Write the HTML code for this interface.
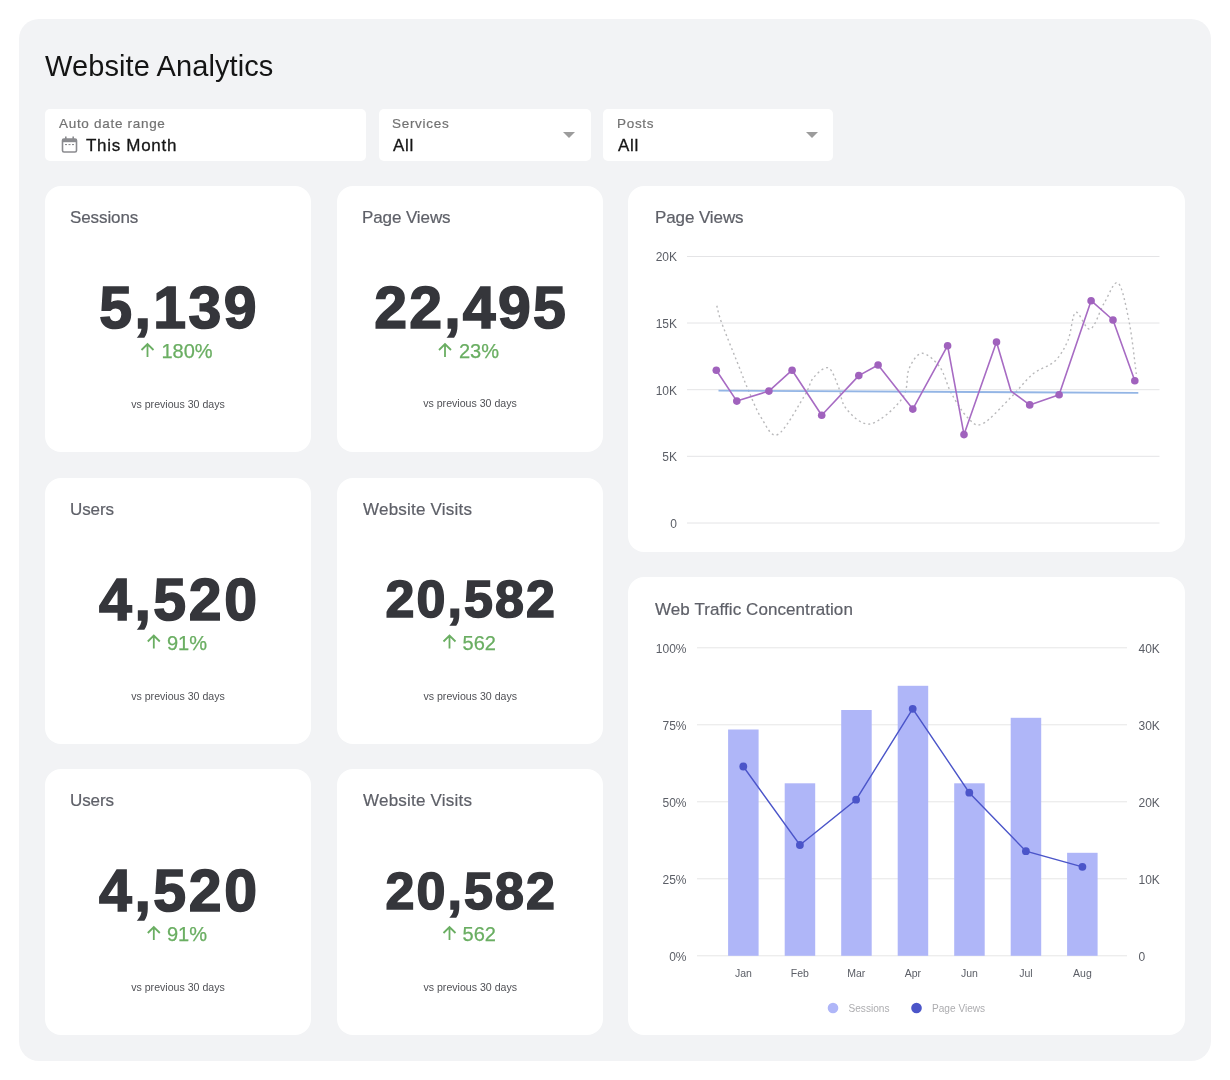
<!DOCTYPE html>
<html><head><meta charset="utf-8">
<style>
html,body{margin:0;padding:0;background:#fff;width:1230px;height:1080px;overflow:hidden;}
body{font-family:"Liberation Sans",sans-serif;position:relative;}
.abs{position:absolute;white-space:nowrap;line-height:1;will-change:transform;}
#panel{position:absolute;left:19px;top:19px;width:1192px;height:1042px;background:#f2f3f5;border-radius:20px;}
.box{position:absolute;background:#fff;border-radius:5px;top:109px;height:52px;}
.card{position:absolute;background:#fff;border-radius:16px;}
.tri{position:absolute;top:132px;width:0;height:0;border-left:6px solid transparent;border-right:6px solid transparent;border-top:6px solid #9c9c9c;}
.flab{font-size:13.5px;color:#727272;letter-spacing:0.7px;-webkit-text-stroke:0.2px #727272;}
.fval{font-size:17px;color:#161616;letter-spacing:0.7px;-webkit-text-stroke:0.3px #161616;}
.ctitle{font-size:17px;color:#5e6068;letter-spacing:-0.1px;-webkit-text-stroke:0.2px #5e6068;}
.big{font-weight:700;color:#35363b;text-align:center;-webkit-text-stroke:1.6px #35363b;}
.grn{font-size:20px;color:#6aae62;text-align:center;-webkit-text-stroke:0.25px #6aae62;}
.vs{font-size:10.6px;color:#505156;text-align:center;}
svg text{font-family:"Liberation Sans",sans-serif;}
</style></head>
<body>
<div id="panel"></div>
<div class="abs" style="left:45px;top:51.9px;font-size:29px;color:#141414;letter-spacing:0.1px;">Website Analytics</div>

<div class="box" style="left:45px;width:321px;"></div>
<div class="box" style="left:379px;width:212px;"></div>
<div class="box" style="left:603px;width:230px;"></div>
<div class="tri" style="left:563px;"></div>
<div class="tri" style="left:805.5px;"></div>

<div class="abs flab" style="left:59px;top:117px;">Auto date range</div>
<div class="abs fval" style="left:86px;top:136.9px;">This Month</div>
<svg class="abs" style="left:61px;top:136px;" width="17" height="17" viewBox="0 0 17 17">
  <rect x="1.5" y="3" width="14" height="13" rx="1.5" fill="none" stroke="#8a8b8f" stroke-width="1.6"/>
  <rect x="1.5" y="3" width="14" height="3.2" fill="#8a8b8f"/>
  <rect x="4" y="0.5" width="1.6" height="3" fill="#8a8b8f"/>
  <rect x="11.4" y="0.5" width="1.6" height="3" fill="#8a8b8f"/>
  <rect x="4" y="8" width="2" height="1.1" fill="#8a8b8f"/>
  <rect x="7.5" y="8" width="2" height="1.1" fill="#8a8b8f"/>
  <rect x="11" y="8" width="2" height="1.1" fill="#8a8b8f"/>
</svg>
<div class="abs flab" style="left:392px;top:117px;">Services</div>
<div class="abs fval" style="left:393px;top:136.9px;">All</div>
<div class="abs flab" style="left:617px;top:117px;">Posts</div>
<div class="abs fval" style="left:617.5px;top:136.8px;">All</div>

<!-- KPI cards -->
<div class="card" style="left:45px;top:186px;width:266px;height:266px;"></div>
<div class="card" style="left:336.5px;top:186px;width:266px;height:266px;"></div>
<div class="card" style="left:45px;top:477.5px;width:266px;height:266px;"></div>
<div class="card" style="left:336.5px;top:477.5px;width:266.5px;height:266.5px;"></div>
<div class="card" style="left:45px;top:769px;width:266px;height:266px;"></div>
<div class="card" style="left:336.5px;top:769px;width:266.5px;height:266px;"></div>
<div class="card" style="left:628px;top:186px;width:557px;height:366px;"></div>
<div class="card" style="left:628px;top:577px;width:557px;height:458px;"></div>

<!-- card 1 -->
<div class="abs ctitle" style="left:70px;top:209.2px;">Sessions</div>
<div class="abs big" style="left:45px;width:266px;top:279.2px;font-size:59px;letter-spacing:2.4px;text-indent:2.4px;">5,139</div>
<div class="abs grn" style="left:45px;width:266px;top:341.3px;"><span style="display:inline-block;width:18px;"></span>180%</div>
<div class="abs vs" style="left:45px;width:266px;top:399.3px;">vs previous 30 days</div>

<!-- card 2 -->
<div class="abs ctitle" style="left:361.5px;top:209.2px;">Page Views</div>
<div class="abs big" style="left:336.5px;width:266px;top:278.9px;font-size:59px;letter-spacing:2.2px;text-indent:2.2px;">22,495</div>
<div class="abs grn" style="left:336.5px;width:266px;top:341px;"><span style="display:inline-block;width:18px;"></span>23%</div>
<div class="abs vs" style="left:336.5px;width:266px;top:398.4px;">vs previous 30 days</div>

<!-- card 3 -->
<div class="abs ctitle" style="left:70px;top:500.7px;">Users</div>
<div class="abs big" style="left:45px;width:266px;top:570.8px;font-size:59px;letter-spacing:2.6px;text-indent:2.6px;">4,520</div>
<div class="abs grn" style="left:45px;width:266px;top:632.7px;"><span style="display:inline-block;width:18px;"></span>91%</div>
<div class="abs vs" style="left:45px;width:266px;top:690.8px;">vs previous 30 days</div>

<!-- card 4 -->
<div class="abs ctitle" style="left:363px;top:500.7px;letter-spacing:0.22px;">Website Visits</div>
<div class="abs big" style="left:336.5px;width:266.5px;top:573.3px;font-size:52px;letter-spacing:2.1px;text-indent:2.1px;">20,582</div>
<div class="abs grn" style="left:336.5px;width:266.5px;top:632.5px;"><span style="display:inline-block;width:18px;"></span>562</div>
<div class="abs vs" style="left:336.5px;width:266.5px;top:690.8px;">vs previous 30 days</div>

<!-- card 5 -->
<div class="abs ctitle" style="left:70px;top:792.2px;">Users</div>
<div class="abs big" style="left:45px;width:266px;top:861.7px;font-size:59px;letter-spacing:2.6px;text-indent:2.6px;">4,520</div>
<div class="abs grn" style="left:45px;width:266px;top:924.2px;"><span style="display:inline-block;width:18px;"></span>91%</div>
<div class="abs vs" style="left:45px;width:266px;top:982.3px;">vs previous 30 days</div>

<!-- card 6 -->
<div class="abs ctitle" style="left:363px;top:792.2px;letter-spacing:0.22px;">Website Visits</div>
<div class="abs big" style="left:336.5px;width:266.5px;top:864.6px;font-size:52px;letter-spacing:2.1px;text-indent:2.1px;">20,582</div>
<div class="abs grn" style="left:336.5px;width:266.5px;top:924px;"><span style="display:inline-block;width:18px;"></span>562</div>
<div class="abs vs" style="left:336.5px;width:266.5px;top:982.3px;">vs previous 30 days</div>

<!-- chart titles -->
<div class="abs ctitle" style="left:654.5px;top:209.2px;">Page Views</div>
<div class="abs ctitle" style="left:654.5px;top:600.7px;letter-spacing:0.08px;">Web Traffic Concentration</div>

<!-- chart overlay svg -->
<svg style="position:absolute;left:0;top:0;" width="1230" height="1080" viewBox="0 0 1230 1080">
  <!-- chart1 grid -->
  <g stroke="#e4e4e6" stroke-width="1">
    <line x1="687" y1="256.5" x2="1159.5" y2="256.5"/>
    <line x1="687" y1="323" x2="1159.5" y2="323"/>
    <line x1="687" y1="389.7" x2="1159.5" y2="389.7"/>
    <line x1="687" y1="456.3" x2="1159.5" y2="456.3"/>
    <line x1="687" y1="523" x2="1159.5" y2="523"/>
  </g>
  <g font-size="12" fill="#5b5e66" text-anchor="end">
    <text x="677" y="261.2">20K</text>
    <text x="677" y="327.8">15K</text>
    <text x="677" y="394.5">10K</text>
    <text x="677" y="461.1">5K</text>
    <text x="677" y="527.8">0</text>
  </g>
  <path d="M716.8,305.7 C717.6,308.6 718.0,312.9 721.7,323.0 C725.4,333.1 734.3,354.9 738.8,366.2 C743.3,377.5 744.7,381.9 748.5,390.6 C752.3,399.3 756.6,410.9 761.5,418.2 C766.4,425.5 770.8,438.0 777.8,434.5 C784.8,431.0 797.8,406.5 803.8,397.0 C809.8,387.5 809.5,382.5 813.6,377.6 C817.7,372.7 824.1,366.5 828.2,367.8 C832.3,369.1 835.0,378.9 838.0,385.7 C841.0,392.5 840.7,402.1 846.1,408.5 C851.5,414.9 861.1,425.6 870.5,423.9 C879.9,422.1 896.1,407.2 902.5,398.0 C908.9,388.8 905.8,376.2 909.0,368.8 C912.2,361.4 916.9,353.6 922.0,353.3 C927.1,353.0 935.0,360.6 939.9,367.2 C944.8,373.8 946.7,384.8 951.3,393.2 C955.9,401.6 962.5,412.5 967.6,417.6 C972.8,422.7 975.2,427.1 982.2,424.0 C989.2,420.9 1001.0,407.1 1009.5,398.8 C1018.0,390.5 1025.3,380.3 1032.9,374.0 C1040.5,367.7 1049.2,366.6 1055.0,361.0 C1060.8,355.4 1064.5,348.3 1068.0,340.2 C1071.5,332.1 1072.1,314.1 1075.8,312.3 C1079.5,310.5 1085.4,330.8 1090.2,329.2 C1095.0,327.6 1099.8,310.2 1104.5,302.5 C1109.2,294.8 1114.0,279.8 1118.1,283.0 C1122.2,286.2 1126.2,306.8 1129.2,322.0 C1132.2,337.2 1135.1,365.3 1136.3,374.0" fill="none" stroke="#b9b9bb" stroke-width="1.4" stroke-dasharray="2 3"/>
  <line x1="718.5" y1="390.6" x2="1138.3" y2="392.9" stroke="#93b5e5" stroke-width="1.9"/>
  <polyline fill="none" stroke="#a76bc3" stroke-width="1.6" stroke-linejoin="round" points="716.3,370.2 736.8,401.1 768.9,391.1 792.1,370.2 821.7,415.3 858.8,375.6 878.1,365 912.8,409.1 947.6,345.7 964,434.6 996.5,342 1011,391.2 1029.7,404.9 1059.1,394.8 1091.1,300.7 1113,320 1134.8,380.7"/>
  <g fill="#a062bd">
    <circle cx="716.3" cy="370.2" r="3.8"/><circle cx="736.8" cy="401.1" r="3.8"/><circle cx="768.9" cy="391.1" r="3.8"/><circle cx="792.1" cy="370.2" r="3.8"/><circle cx="821.7" cy="415.3" r="3.8"/><circle cx="858.8" cy="375.6" r="3.8"/><circle cx="878.1" cy="365" r="3.8"/><circle cx="912.8" cy="409.1" r="3.8"/><circle cx="947.6" cy="345.7" r="3.8"/><circle cx="964" cy="434.6" r="3.8"/><circle cx="996.5" cy="342" r="3.8"/><circle cx="1029.7" cy="404.9" r="3.8"/><circle cx="1059.1" cy="394.8" r="3.8"/><circle cx="1091.1" cy="300.7" r="3.8"/><circle cx="1113" cy="320" r="3.8"/><circle cx="1134.8" cy="380.7" r="3.8"/>
  </g>

  <!-- chart2 grid -->
  <g stroke="#e6e6e6" stroke-width="1">
    <line x1="697" y1="647.8" x2="1127" y2="647.8"/>
    <line x1="697" y1="724.8" x2="1127" y2="724.8"/>
    <line x1="697" y1="801.8" x2="1127" y2="801.8"/>
    <line x1="697" y1="878.8" x2="1127" y2="878.8"/>
    <line x1="697" y1="955.8" x2="1127" y2="955.8"/>
  </g>
  <g font-size="12" fill="#5b5e66" text-anchor="end">
    <text x="686.5" y="653.1">100%</text>
    <text x="686.5" y="730.1">75%</text>
    <text x="686.5" y="807.1">50%</text>
    <text x="686.5" y="884.1">25%</text>
    <text x="686.5" y="961.1">0%</text>
  </g>
  <g font-size="12" fill="#5b5e66" text-anchor="start">
    <text x="1138.5" y="653.1">40K</text>
    <text x="1138.5" y="730.1">30K</text>
    <text x="1138.5" y="807.1">20K</text>
    <text x="1138.5" y="884.1">10K</text>
    <text x="1138.5" y="961.1">0</text>
  </g>
  <g fill="#afb6f8">
    <rect x="728.1" y="729.5" width="30.5" height="226.3"/>
    <rect x="784.7" y="783.3" width="30.5" height="172.5"/>
    <rect x="841.2" y="710" width="30.5" height="245.8"/>
    <rect x="897.7" y="685.8" width="30.5" height="270"/>
    <rect x="954.2" y="783.3" width="30.5" height="172.5"/>
    <rect x="1010.7" y="717.8" width="30.5" height="238"/>
    <rect x="1067.1" y="852.8" width="30.5" height="103"/>
  </g>
  <polyline fill="none" stroke="#4b55c9" stroke-width="1.4" points="743.3,766.5 799.9,845 856.1,799.7 912.7,708.8 969.3,792.7 1025.9,851.2 1082.4,866.8"/>
  <g fill="#4b55c9">
    <circle cx="743.3" cy="766.5" r="3.9"/><circle cx="799.9" cy="845" r="3.9"/><circle cx="856.1" cy="799.7" r="3.9"/><circle cx="912.7" cy="708.8" r="3.9"/><circle cx="969.3" cy="792.7" r="3.9"/><circle cx="1025.9" cy="851.2" r="3.9"/><circle cx="1082.4" cy="866.8" r="3.9"/>
  </g>
  <g font-size="10.5" fill="#5b5e66" text-anchor="middle">
    <text x="743.5" y="977.4">Jan</text>
    <text x="799.9" y="977.4">Feb</text>
    <text x="856.3" y="977.4">Mar</text>
    <text x="912.8" y="977.4">Apr</text>
    <text x="969.4" y="977.4">Jun</text>
    <text x="1025.9" y="977.4">Jul</text>
    <text x="1082.4" y="977.4">Aug</text>
  </g>
  <circle cx="833" cy="1008" r="5.3" fill="#afb6f8"/>
  <circle cx="916.5" cy="1008" r="5.3" fill="#4b55c9"/>
  <g font-size="10.1" fill="#adadb0">
    <text x="848.5" y="1011.8">Sessions</text>
    <text x="932" y="1011.8">Page Views</text>
  </g>
  <!-- arrows -->
  <g stroke="#6aae62" stroke-width="1.8" fill="none" stroke-linecap="butt">
    <path d="M147.5,357 V344 M141.5,350 L147.5,344 L153.5,350"/>
    <path d="M445,357 V344 M439,350 L445,344 L451,350"/>
    <path d="M153.8,648.5 V635.5 M147.8,641.5 L153.8,635.5 L159.8,641.5"/>
    <path d="M449.5,648.5 V635.5 M443.5,641.5 L449.5,635.5 L455.5,641.5"/>
    <path d="M153.8,940 V927 M147.8,933 L153.8,927 L159.8,933"/>
    <path d="M449.5,940 V927 M443.5,933 L449.5,927 L455.5,933"/>
  </g>
</svg>
</body></html>
